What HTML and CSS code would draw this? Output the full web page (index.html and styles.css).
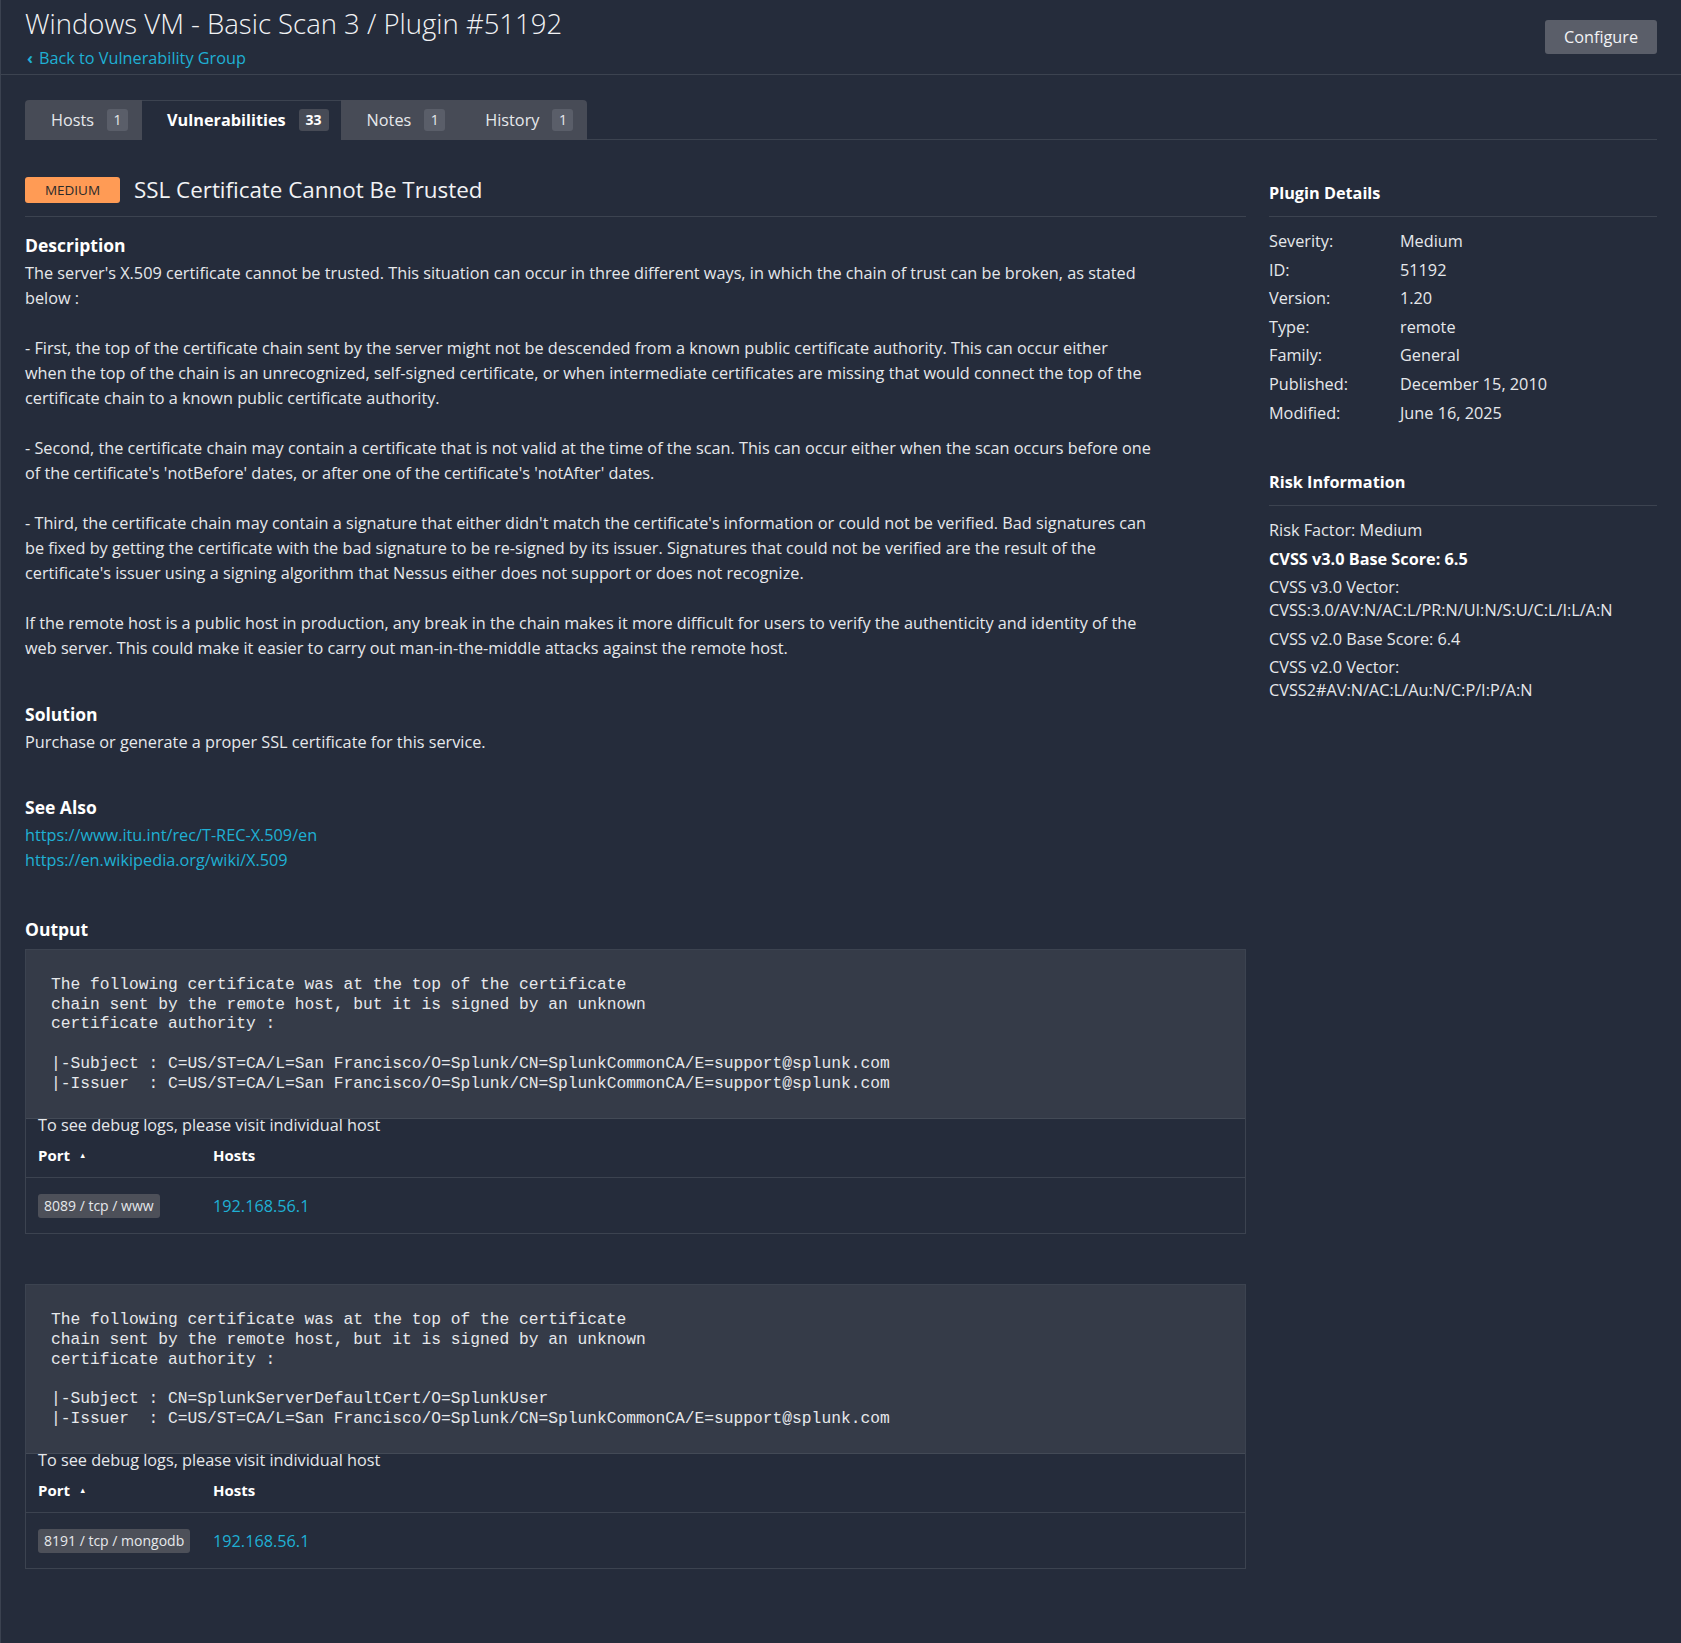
FILE: index.html
```html
<!DOCTYPE html>
<html lang="en">
<head>
  <meta charset="UTF-8" />
  <meta name="viewport" content="width=device-width, initial-scale=1.0" />
  <title>Windows VM - Basic Scan 3 / Plugin #51192</title>
  <link rel="stylesheet" href="styles.css">
</head>
<body>
  <div class="page">
    <header class="page-header">
      <div class="titles">
        <h1>Windows VM - Basic Scan 3 / Plugin #51192</h1>
        <a class="back" href="#"><span class="chev">&#8249;</span>Back to Vulnerability Group</a>
      </div>
      <button type="button" class="configure">Configure</button>
    </header>

    <div class="content">
      <nav class="tabs">
        <a class="tab first" href="#">Hosts <span class="count">1</span></a>
        <a class="tab active" href="#">Vulnerabilities <span class="count">33</span></a>
        <a class="tab" href="#">Notes <span class="count">1</span></a>
        <a class="tab last" href="#">History <span class="count">1</span></a>
      </nav>

      <div class="columns">
        <main class="main">
          <div class="vuln-title">
            <span class="severity">MEDIUM</span>
            <h2>SSL Certificate Cannot Be Trusted</h2>
          </div>

          <section class="block">
            <h3>Description</h3>
            <div class="text">
              <p>The server's X.509 certificate cannot be trusted. This situation can occur in three different ways, in which the chain of trust can be broken, as stated below :</p>
              <p>- First, the top of the certificate chain sent by the server might not be descended from a known public certificate authority. This can occur either when the top of the chain is an unrecognized, self-signed certificate, or when intermediate certificates are missing that would connect the top of the certificate chain to a known public certificate authority.</p>
              <p>- Second, the certificate chain may contain a certificate that is not valid at the time of the scan. This can occur either when the scan occurs before one of the certificate's 'notBefore' dates, or after one of the certificate's 'notAfter' dates.</p>
              <p>- Third, the certificate chain may contain a signature that either didn't match the certificate's information or could not be verified. Bad signatures can be fixed by getting the certificate with the bad signature to be re-signed by its issuer. Signatures that could not be verified are the result of the certificate's issuer using a signing algorithm that Nessus either does not support or does not recognize.</p>
              <p>If the remote host is a public host in production, any break in the chain makes it more difficult for users to verify the authenticity and identity of the web server. This could make it easier to carry out man-in-the-middle attacks against the remote host.</p>
            </div>
          </section>

          <section class="block">
            <h3>Solution</h3>
            <div class="text">
              <p>Purchase or generate a proper SSL certificate for this service.</p>
            </div>
          </section>

          <section class="block">
            <h3>See Also</h3>
            <div class="text links">
              <a href="#">https://www.itu.int/rec/T-REC-X.509/en</a>
              <a href="#">https://en.wikipedia.org/wiki/X.509</a>
            </div>
          </section>

          <section class="block output">
            <h3>Output</h3>

            <div class="output-box">
              <pre>The following certificate was at the top of the certificate
chain sent by the remote host, but it is signed by an unknown
certificate authority :

|-Subject : C=US/ST=CA/L=San Francisco/O=Splunk/CN=SplunkCommonCA/E=support@splunk.com
|-Issuer  : C=US/ST=CA/L=San Francisco/O=Splunk/CN=SplunkCommonCA/E=support@splunk.com</pre>
              <div class="debug">To see debug logs, please visit individual host</div>
              <div class="host-table">
                <div class="row head">
                  <span class="col-port">Port <span class="sort">&#9650;</span></span>
                  <span class="col-hosts">Hosts</span>
                </div>
                <div class="row">
                  <span class="col-port"><span class="port">8089 / tcp / www</span></span>
                  <span class="col-hosts"><a href="#">192.168.56.1</a></span>
                </div>
              </div>
            </div>

            <div class="output-box">
              <pre>The following certificate was at the top of the certificate
chain sent by the remote host, but it is signed by an unknown
certificate authority :

|-Subject : CN=SplunkServerDefaultCert/O=SplunkUser
|-Issuer  : C=US/ST=CA/L=San Francisco/O=Splunk/CN=SplunkCommonCA/E=support@splunk.com</pre>
              <div class="debug">To see debug logs, please visit individual host</div>
              <div class="host-table">
                <div class="row head">
                  <span class="col-port">Port <span class="sort">&#9650;</span></span>
                  <span class="col-hosts">Hosts</span>
                </div>
                <div class="row">
                  <span class="col-port"><span class="port">8191 / tcp / mongodb</span></span>
                  <span class="col-hosts"><a href="#">192.168.56.1</a></span>
                </div>
              </div>
            </div>
          </section>
        </main>

        <aside class="side">
          <section class="side-block">
            <h4>Plugin Details</h4>
            <dl class="details">
              <dt>Severity:</dt><dd>Medium</dd>
              <dt>ID:</dt><dd>51192</dd>
              <dt>Version:</dt><dd>1.20</dd>
              <dt>Type:</dt><dd>remote</dd>
              <dt>Family:</dt><dd>General</dd>
              <dt>Published:</dt><dd>December 15, 2010</dd>
              <dt>Modified:</dt><dd>June 16, 2025</dd>
            </dl>
          </section>

          <section class="side-block">
            <h4>Risk Information</h4>
            <p>Risk Factor: Medium</p>
            <p><strong>CVSS v3.0 Base Score: 6.5</strong></p>
            <p>CVSS v3.0 Vector:<br />CVSS:3.0/AV:N/AC:L/PR:N/UI:N/S:U/C:L/I:L/A:N</p>
            <p>CVSS v2.0 Base Score: 6.4</p>
            <p>CVSS v2.0 Vector:<br />CVSS2#AV:N/AC:L/Au:N/C:P/I:P/A:N</p>
          </section>
        </aside>
      </div>
    </div>
  </div>
</body>
</html>
```

FILE: styles.css
```css
body {
  margin: 0;
  background: #252c3b;
  color: #e6e8eb;
  font-family: "Open Sans", "Liberation Sans", sans-serif;
  font-size: 16.25px;
}
a {
  color: #1fb0d4;
  text-decoration: none;
}
.page {
  min-height: 1643px;
  border-left: 1px solid #3b4250;
  box-sizing: border-box;
}
.page-header {
  display: flex;
  justify-content: space-between;
  align-items: flex-start;
  padding: 4px 24px 5px 24px;
  height: 65px;
  border-bottom: 1px solid #3c4350;
}
.page-header h1 {
  margin: 0;
  font-size: 27.5px;
  font-weight: 300;
  line-height: 40px;
  color: #f2f3f5;
}
.back {
  display: block;
  margin-top: 3px;
  line-height: 22px;
  font-size: 16.25px;
}
.chev {
  font-weight: 700;
  margin-right: 6px;
  margin-left: 2px;
}
.configure {
  margin-top: 16px;
  width: 112px;
  height: 34px;
  border: none;
  border-radius: 3px;
  background: #5a5e69;
  color: #f2f3f5;
  font-family: inherit;
  font-size: 16.25px;
  cursor: pointer;
}
.content {
  padding: 25px 24px 0 24px;
}
.tabs {
  display: flex;
  border-bottom: 1px solid #3c4350;
}
.tab {
  display: flex;
  align-items: center;
  gap: 13px;
  height: 39px;
  margin-bottom: -1px;
  padding: 0 14px 0 26px;
  background: #474b56;
  color: #e6e8eb;
  border-bottom: 1px solid #474b56;
}
.tab.first {
  border-top-left-radius: 4px;
}
.tab.last {
  border-top-right-radius: 4px;
}
.tab.active {
  background: #252c3b;
  border-top: 1px solid #3c4350;
  border-bottom-color: #252c3b;
  height: 38px;
  padding: 0 12px 0 25px;
  color: #fff;
  font-weight: 700;
}
.count {
  min-width: 21px;
  height: 22px;
  padding: 0 4px;
  box-sizing: border-box;
  border-radius: 3px;
  background: #5a5e69;
  font-size: 14px;
  line-height: 22px;
  text-align: center;
  font-weight: 400;
}
.tab.active .count {
  background: #474b56;
  min-width: 30px;
  font-weight: 700;
}
.columns {
  display: flex;
  gap: 23px;
  padding-top: 35px;
}
.main {
  width: 1221px;
}
.side {
  flex: 1;
}
.vuln-title {
  display: flex;
  align-items: center;
  gap: 14px;
  padding-bottom: 11px;
  border-bottom: 1px solid #3c4350;
}
.severity {
  width: 95px;
  height: 26px;
  border-radius: 3px;
  background: #ff9b55;
  color: #2a2a2a;
  font-size: 13.5px;
  line-height: 26px;
  text-align: center;
}
.vuln-title h2 {
  margin: 0;
  font-size: 22.4px;
  font-weight: 400;
  line-height: 30px;
  color: #f2f3f5;
}
.block {
  margin-top: 41.5px;
}
.block:first-of-type {
  margin-top: 17px;
}
.block h3 {
  margin: 0 0 5px;
  font-size: 17.5px;
  font-weight: 700;
  line-height: 22px;
  color: #fff;
}
.text {
  max-width: 1127px;
  line-height: 25px;
}
.text p {
  margin: 0 0 25px;
}
.text p:last-child {
  margin-bottom: 0;
}
.links a {
  display: block;
  line-height: 25px;
}
.block.output {
  margin-top: 45px;
}
.output h3 {
  margin-bottom: 9px;
}
.output-box {
  border: 1px solid #3c4350;
  margin-bottom: 50px;
}
.output-box pre {
  margin: 0;
  padding: 25px;
  background: #353b48;
  border-bottom: 1px solid #434a56;
  font-family: "Liberation Mono", "Courier New", monospace;
  font-size: 16.25px;
  line-height: 19.7px;
  color: #e6e8eb;
}
.debug {
  padding: 0 12px 4px;
  line-height: 13px;
}
.row {
  display: flex;
  align-items: center;
  padding: 0 12px;
  height: 55px;
}
.row.head {
  height: 38px;
  padding-bottom: 3px;
  border-bottom: 1px solid #3c4350;
  font-weight: 700;
  font-size: 15px;
  color: #fff;
}
.col-port {
  width: 175px;
}
.sort {
  font-size: 7.5px;
  vertical-align: 3px;
  margin-left: 5px;
}
.port {
  display: inline-block;
  height: 24px;
  padding: 0 6px;
  border-radius: 3px;
  background: #4d5059;
  font-size: 14px;
  line-height: 24px;
  color: #e6e8eb;
}
.side-block {
  margin-bottom: 40px;
}
.side-block h4 {
  margin: 0 0 13px;
  padding: 7px 0 12px;
  border-bottom: 1px solid #3c4350;
  font-size: 16.25px;
  line-height: 22px;
  color: #fff;
}
.details {
  display: grid;
  grid-template-columns: 131px 1fr;
  row-gap: 6.1px;
  margin: 0;
  line-height: 22.5px;
}
.details dd {
  margin: 0;
}
.side-block p {
  margin: 0 0 6.2px;
  line-height: 22.5px;
}
.side-block strong {
  color: #fff;
}
```
